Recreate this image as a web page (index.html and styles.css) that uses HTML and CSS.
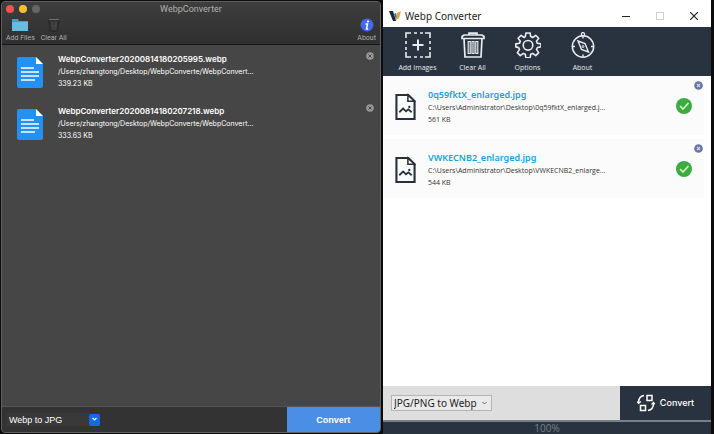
FILE: index.html
```html
<!DOCTYPE html>
<html lang="en">
<head>
  <meta charset="UTF-8">
  <meta name="viewport" content="width=device-width, initial-scale=1.0">
  <title>Webp Converter</title>
  <link rel="stylesheet" href="styles.css">
</head>
<body>
<svg width="0" height="0" class="sprite" aria-hidden="true">
  <symbol id="doc" viewBox="0 0 26 31">
    <path d="M2 0h17l7 7v22a2 2 0 0 1-2 2H2a2 2 0 0 1-2-2V2a2 2 0 0 1 2-2z" fill="#2390f3"/>
    <path d="M19 0l7 7h-7z" fill="#fff"/>
    <path d="M4 11h13M4 15h18M4 19h18M4 23h14" stroke="#fff" stroke-width="1.6"/>
  </symbol>
  <symbol id="image-file" viewBox="0 0 22 28">
    <path d="M1.5 1.5h12.5l6.500 6.500v18.500h-19z" fill="none" stroke="#27303d" stroke-width="2.2"/>
    <path d="M13.500 1.500v6.500h7z" fill="#fff" stroke="#27303d" stroke-width="1.600"/>
    <path d="M4.500 19.500l4-4 3 3 2.500-2 3.500 3" fill="none" stroke="#27303d" stroke-width="1.900"/>
    <circle cx="15" cy="14" r="1.200" fill="#27303d"/>
  </symbol>
  <symbol id="check" viewBox="0 0 16 16">
    <circle cx="8" cy="8" r="8" fill="#3cab43"/>
    <path d="M4 8l3 3 5.500-6" fill="none" stroke="#d9f5a8" stroke-width="1.700"/>
  </symbol>
</svg>

<main class="desktop">
  <section class="window mac">
    <header class="mac-header">
      <div class="mac-title">
        <div class="lights">
          <span class="light red"></span>
          <span class="light yellow"></span>
          <span class="light grey"></span>
        </div>
        <h1>WebpConverter</h1>
      </div>
      <div class="mac-toolbar">
        <button type="button">
          <svg width="16" height="14" viewBox="0 0 16 14"><path d="M0 1h6l1 2h9v10H0z" fill="#3f9fc8"/><path d="M0 4h16v9H0z" fill="#67bde0"/></svg>
          Add Files
        </button>
        <button type="button">
          <svg width="16" height="14" viewBox="0 0 16 14" fill="none" stroke="#242424"><path d="M3 2l1.500 11h7L13 2z" fill="#393939"/><path d="M6 4l1 8M10 4L9 12M5 8h6" stroke="#484848"/><path d="M3 1.500h10" stroke="#707070"/></svg>
          Clear All
        </button>
        <button type="button" class="push">
          <svg width="14" height="14" viewBox="0 0 14 14"><circle cx="7" cy="7" r="6.500" fill="#4269ee"/><circle cx="8" cy="3.500" r="1.100" fill="#fff"/><path d="M5.500 6h2L6.500 11h1.700" fill="none" stroke="#fff" stroke-width="1.500"/></svg>
          About
        </button>
      </div>
    </header>
    <ul class="files">
      <li class="mac-file">
        <svg class="doc-icon"><use href="#doc"/></svg>
        <div class="info">
          <h2>WebpConverter20200814180205995.webp</h2>
          <p>/Users/zhangtong/Desktop/WebpConverte/WebpConvert...</p>
          <p>339.23 KB</p>
        </div>
        <button type="button" class="remove" aria-label="Remove file">
          <svg width="8" height="8" viewBox="0 0 8 8"><circle cx="4" cy="4" r="3.800" fill="#999"/><path d="M2.500 2.500l3 3M5.500 2.500l-3 3" stroke="#444"/></svg>
        </button>
      </li>
      <li class="mac-file">
        <svg class="doc-icon"><use href="#doc"/></svg>
        <div class="info">
          <h2>WebpConverter20200814180207218.webp</h2>
          <p>/Users/zhangtong/Desktop/WebpConverte/WebpConvert...</p>
          <p>333.63 KB</p>
        </div>
        <button type="button" class="remove" aria-label="Remove file">
          <svg width="8" height="8" viewBox="0 0 8 8"><circle cx="4" cy="4" r="3.800" fill="#999"/><path d="M2.500 2.500l3 3M5.500 2.500l-3 3" stroke="#444"/></svg>
        </button>
      </li>
    </ul>
    <footer class="mac-footer">
      <label class="picker mac-picker">
        <select aria-label="Output format">
          <option>Webp to JPG</option>
        </select>
        <span class="arrow"><svg width="7" height="5" viewBox="0 0 7 5"><path d="M1.500 1l2 2 2-2" fill="none" stroke="#fff" stroke-width="1.200"/></svg></span>
      </label>
      <button type="button" class="mac-convert">Convert</button>
    </footer>
  </section>

  <section class="window win">
    <header class="win-title">
      <svg width="12" height="10" viewBox="0 0 12 10"><path d="M0 0h4l3 10H4z" fill="#16283d"/><path d="M5 3l2-1 1 4-1 3z" fill="#3d7590"/><path d="M7 9l1-7 4-2-2 7z" fill="#dca24c"/></svg>
      <h1>Webp Converter</h1>
      <div class="controls">
        <button type="button" aria-label="Minimize"><svg width="8" height="8" viewBox="0 0 8 8"><path d="M0 4.500h8" stroke="#222"/></svg></button>
        <button type="button" aria-label="Maximize"><svg width="8" height="8" viewBox="0 0 8 8"><path d="M.5.5h7v7h-7z" fill="none" stroke="#ccc"/></svg></button>
        <button type="button" aria-label="Close"><svg width="8" height="8" viewBox="0 0 8 8"><path d="M0 0l8 8M8 0L0 8" stroke="#222" stroke-width="1.200"/></svg></button>
      </div>
    </header>
    <nav class="win-toolbar">
      <button type="button">
        <svg viewBox="0 0 26 26"><path d="M1 6V1h5M20 1h5v5M25 20v5h-5M6 25H1v-5M9 1h3M15 1h3M9 25h3M15 25h3M1 9v3M1 15v3M25 9v3M25 15v3"/><path d="M13 7.500v11M7.500 13h11" stroke-width="2"/></svg>
        Add Images
      </button>
      <button type="button">
        <svg viewBox="0 0 26 26"><path d="M2 6.500V4.500l2-1.500h18l2 1.500v2zM9 3V1.200h8V3M4 6.500l1 18.500h16l1-18.500" stroke-width="1.700"/><path d="M8.200 9.500h2v12h-2zM12 9.500h2v12h-2zM15.800 9.500h2v12h-2z" stroke-width="1.200"/></svg>
        Clear All
      </button>
      <button type="button">
        <svg viewBox="0 0 26 26"><path d="M10.900 1h4.200l.6 3.600 2 .9 3-2.200 3 3-2.200 3 .9 2 3.600.6v3l-3.600.6-.9 2.100 2.200 3-3 3-3-2.200-2 .9-.6 3.600h-4.200l-.6-3.600-2-.9-3 2.200-3-3 2.200-3-.9-2L.8 14.900v-3l3.600-.6.9-2-2.200-3 3-3 3 2.200 1.200-.9z" stroke-linejoin="round"/><circle cx="13" cy="13.300" r="4.800"/></svg>
        Options
      </button>
      <button type="button">
        <svg viewBox="0 0 26 26"><circle cx="13" cy="14.500" r="10.700" stroke-width="1.500"/><circle cx="13" cy="2.200" r="1.600" stroke-width="1.300"/><path d="M13 4v2.500M13 22.500v2.500M2.500 14.500H5M21 14.500h2.500M8 9l7 2.500 3.500 8.500-7-2.500z" stroke-width="1.400"/><circle cx="13" cy="14.500" r="1" stroke-width="1"/></svg>
        About
      </button>
    </nav>
    <ul class="files">
      <li class="win-file">
        <svg class="image-icon"><use href="#image-file"/></svg>
        <div class="info">
          <h2>0q59fktX_enlarged.jpg</h2>
          <p>C:\Users\Administrator\Desktop\0q59fktX_enlarged.j...</p>
          <p>561 KB</p>
        </div>
        <svg class="check-icon"><use href="#check"/></svg>
        <button type="button" class="remove" aria-label="Remove file">
          <svg width="9" height="9" viewBox="0 0 9 9"><circle cx="4.500" cy="4.500" r="4.300" fill="#6b75a5"/><path d="M3 3l3 3M6 3L3 6" stroke="#d0d5ea" stroke-width="1.200"/></svg>
        </button>
      </li>
      <li class="win-file">
        <svg class="image-icon"><use href="#image-file"/></svg>
        <div class="info">
          <h2>VWKECNB2_enlarged.jpg</h2>
          <p>C:\Users\Administrator\Desktop\VWKECNB2_enlarge...</p>
          <p>544 KB</p>
        </div>
        <svg class="check-icon"><use href="#check"/></svg>
        <button type="button" class="remove" aria-label="Remove file">
          <svg width="9" height="9" viewBox="0 0 9 9"><circle cx="4.500" cy="4.500" r="4.300" fill="#6b75a5"/><path d="M3 3l3 3M6 3L3 6" stroke="#d0d5ea" stroke-width="1.200"/></svg>
        </button>
      </li>
    </ul>
    <footer class="win-footer">
      <label class="picker win-picker">
        <select aria-label="Conversion type">
          <option>JPG/PNG to Webp</option>
        </select>
        <span class="arrow"><svg width="7" height="5" viewBox="0 0 7 5"><path d="M1.500 1l2 2 2-2" fill="none" stroke="#666"/></svg></span>
      </label>
      <button type="button" class="win-convert">
        <svg width="18" height="18" viewBox="0 0 18 18" fill="none" stroke="#fff" stroke-width="1.500"><path d="M10 1.500h5v5h-5zM3.500 11.500h5v5h-5zM7 1.500C3.500 2 1.500 4.500 1.500 9M11 16.500c3.500-.5 5.500-3 5.500-7.500"/><path d="M0 7.500L1.500 9.500 4 7.500M14.500 10.500l2-2 1.500 2" stroke-width="1.200"/></svg>
        Convert
      </button>
    </footer>
    <div class="status">100%</div>
  </section>
</main>
</body>
</html>
```

FILE: styles.css
```css
* { box-sizing: border-box; }
body { margin: 0; background: #0b0b0c; }
h1, h2, p, ul { margin: 0; padding: 0; font-weight: normal; }
ul { list-style: none; }
svg { display: block; flex: none; }
button { padding: 0; border: none; background: none; color: inherit; font: inherit; cursor: pointer; }
.sprite { position: absolute; }

.desktop { display: grid; grid-template-columns: 380fr 328fr; gap: 2px; min-height: 100vh; padding: 0 3px 0 1px; }
.window { display: flex; flex-direction: column; min-width: 0; }
.files { flex: 1; }
.info { flex: 1; min-width: 0; white-space: nowrap; }
.remove { align-self: flex-start; }
.picker { display: grid; align-items: center; }
.picker select, .picker .arrow { grid-area: 1 / 1; }
.picker select { appearance: none; width: 100%; height: 100%; margin: 0; padding: 0 0 0 2px; border: none; background: none; color: inherit; font: inherit; }
.arrow { display: flex; align-items: center; justify-content: center; justify-self: end; height: 100%; pointer-events: none; }

/* dark window */
.mac { margin: 1px 0; border: 1px solid #606060; border-radius: 4px; overflow: hidden; background: #464646; color: #fff; font: 7px/12px Inter, sans-serif; }
.mac-header { height: 43px; background: linear-gradient(#3e3e3e, #353535 60%, #303030); border-bottom: 1px solid #151515; color: #b0b0b0; font-family: Roboto, sans-serif; }
.mac-title { display: grid; grid-template-columns: 1fr auto 1fr; align-items: center; height: 13px; }
.mac-title h1 { font-size: 9px; }
.lights { display: flex; gap: 5px; padding-left: 4px; }
.light { width: 8px; height: 8px; border-radius: 50%; }
.red { background: #f4524f; }
.yellow { background: #f8be2e; }
.grey { background: #656565; }
.mac-toolbar { display: flex; gap: 6px; padding: 3px 4px 0; }
.mac-toolbar button { display: flex; flex-direction: column; align-items: center; }
.mac-toolbar .push { margin-left: auto; }
.mac-file { display: flex; height: 52px; padding: 7px 6px 0 15px; }
.mac-file .info { padding-top: 1px; }
.doc-icon { width: 26px; height: 31px; margin: 5px 15px 0 0; }
.mac-file h2 { font-size: 8px; line-height: 13px; font-weight: 600; }
.mac-file .info p { font-weight: 400; }
.mac-footer { display: flex; align-items: center; justify-content: space-between; height: 26px; padding-left: 5px; background: #333; border-top: 1px solid #555; }
.mac-picker { width: 93px; height: 13px; background: #393939; font: 9px/12px "Liberation Sans", sans-serif; }
.mac-picker .arrow { width: 11px; height: 12px; border-radius: 2px; background: #1668e8; }
.mac-convert { width: 25%; height: 100%; background: #4a8ee6; font: 700 9px/12px "Liberation Sans", sans-serif; }

/* light window */
.win { background: #fff; color: #333; font: 7px/12px "Open Sans", sans-serif; }
.win-title { display: flex; align-items: center; height: 27px; padding: 4px 13px 0 6px; }
.win-title h1 { margin-left: 4px; font: 10px/14px "Noto Sans", sans-serif; color: #222; }
.controls { display: flex; gap: 26px; margin-left: auto; }
.win-toolbar { display: flex; height: 49px; padding: 5px 0 0 7px; background: #29333f; color: #e6eaee; }
.win-toolbar button { display: flex; flex-direction: column; align-items: center; gap: 4px; width: 55px; }
.win-toolbar svg { width: 26px; height: 26px; fill: none; stroke: #e8ecf0; stroke-width: 1.6; }
.win-file { display: flex; height: 59px; margin: 0 7px 4px 0; padding: 5px 1px 0 12px; background: #fbfbfb; }
.image-icon { width: 21px; height: 28px; margin: 12px 12px 0 0; }
.win-file .info { padding-top: 7px; }
.win-file h2 { font: 600 9px/14px "Noto Sans", sans-serif; color: #189fdc; }
.check-icon { width: 16px; height: 16px; margin: 17px 2px 0 0; }
.win-footer { display: flex; align-items: center; justify-content: space-between; height: 34px; padding-left: 8px; background: #dedede; }
.win-picker { width: 101px; height: 16px; border: 1px solid #b4b4b4; background: #eaeaea; color: #222; font: 10px/14px "Noto Sans", sans-serif; }
.win-picker .arrow { width: 13px; }
.win-convert { display: flex; align-items: center; justify-content: center; gap: 5px; width: 91px; height: 100%; background: #29333f; color: #fff; font: 500 9px/14px Inter, sans-serif; }
.status { height: 14px; border-top: 2px solid #76808b; background: #29333f; color: #74808b; font-size: 10px; text-align: center; }
```
